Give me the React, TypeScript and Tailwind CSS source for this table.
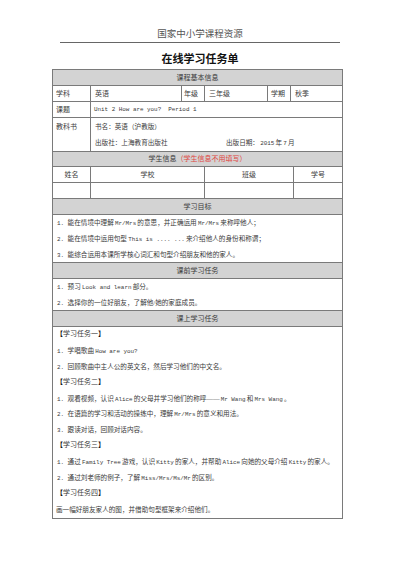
import React from "react";

const B = "border-[#7a7a7a]";

function Header({ children, h = "h-[16px]" }: { children: React.ReactNode; h?: string }) {
  return (
    <div className={`${h} border-b ${B} bg-[#d3d3d3] flex items-center justify-center text-[7px]`}>
      {children}
    </div>
  );
}

function L({ children, m = true }: { children: React.ReactNode; m?: boolean }) {
  return (
    <span className={`font-['Liberation_Mono','Noto_Sans_CJK_SC',monospace] text-[5.9px] whitespace-pre ${m ? "mx-[1.2px]" : ""}`}>
      {children}
    </span>
  );
}

function Ln({ children, h = "h-[16px]", cls = "" }: { children: React.ReactNode; h?: string; cls?: string }) {
  return <div className={`${h} overflow-visible ${cls}`}>{children}</div>;
}

function Task({ n }: { n: string }) {
  return (
    <Ln h="h-[15.9px]" cls="text-[7px]">
      <span className="font-bold text-[#111]">【</span>学习任务{n}<span className="font-bold text-[#111]">】</span>
    </Ln>
  );
}

export default function App() {
  return (
    <div className="w-[400px] h-[566px] bg-white overflow-hidden text-[#3a3a3a] font-['Liberation_Serif','Noto_Sans_CJK_SC',sans-serif]">
      <div className="pt-[27px] text-center text-[9.5px] leading-[14px] text-[#555]">国家中小学课程资源</div>
      <div className="mx-[60px] mt-[1px] border-t border-[#666]" />
      <div className="mt-[10px] text-center text-[11px] leading-[12px] font-bold text-[#111]">在线学习任务单</div>
      <div className={`mt-[4px] ml-[52px] w-[291px] border ${B} text-[6.6px] leading-[16px] whitespace-nowrap`}>
        <Header>课程基本信息</Header>
        <div className={`h-[16px] border-b ${B} grid grid-cols-[38px_91px_23px_63px_23px_1fr] text-[7px]`}>
          <div className={`border-r ${B} px-[3px] flex items-center`}>学科</div>
          <div className={`border-r ${B} px-[4px] flex items-center`}>英语</div>
          <div className={`border-r ${B} px-[2px] flex items-center`}>年级</div>
          <div className={`border-r ${B} px-[4px] flex items-center`}>三年级</div>
          <div className={`border-r ${B} px-[3px] flex items-center`}>学期</div>
          <div className="px-[4px] flex items-center">秋季</div>
        </div>
        <div className={`h-[16px] border-b ${B} grid grid-cols-[38px_1fr]`}>
          <div className={`border-r ${B} px-[3px] flex items-center text-[7px]`}>课题</div>
          <div className="px-[3px] flex items-center"><L m={false}>Unit 2 How are you?  Period 1</L></div>
        </div>
        <div className={`h-[34px] border-b ${B} grid grid-cols-[38px_1fr]`}>
          <div className={`border-r ${B} px-[3px] pt-[1px] text-[7px]`}>教科书</div>
          <div className="px-[4px] pt-[1px]">
            <Ln>书名：英语（沪教版）</Ln>
            <div className="flex h-[16px]">
              <span className="w-[131px]">出版社：上海教育出版社</span>
              <span>出版日期：<L>2015</L>年<L>7</L>月</span>
            </div>
          </div>
        </div>
        <Header h="h-[15px]">
          <span>学生信息</span>
          <span className="text-[#e0463f]">（学生信息不用填写）</span>
        </Header>
        <div className={`h-[16px] border-b ${B} grid grid-cols-[38px_114px_89px_1fr] text-[7px]`}>
          <div className={`border-r ${B} flex items-center justify-center`}>姓名</div>
          <div className={`border-r ${B} flex items-center justify-center`}>学校</div>
          <div className={`border-r ${B} flex items-center justify-center`}>班级</div>
          <div className="flex items-center justify-center">学号</div>
        </div>
        <div className={`h-[16px] border-b ${B} grid grid-cols-[38px_114px_89px_1fr]`}>
          <div className={`border-r ${B}`} />
          <div className={`border-r ${B}`} />
          <div className={`border-r ${B}`} />
          <div />
        </div>
        <Header>学习目标</Header>
        <div className={`h-[48px] border-b ${B} px-[4px]`}>
          <Ln><L m={false}>1. </L>能在情境中理解<L>Mr/Mrs</L>的意思，并正确运用<L>Mr/Mrs</L>来称呼他人；</Ln>
          <Ln><L m={false}>2. </L>能在情境中运用句型<L>This is .... ...</L>来介绍他人的身份和称谓；</Ln>
          <Ln><L m={false}>3. </L>能综合运用本课所学核心词汇和句型介绍朋友和他的家人。</Ln>
        </div>
        <Header>课前学习任务</Header>
        <div className={`h-[32px] border-b ${B} px-[4px]`}>
          <Ln><L m={false}>1. </L>预习<L>Look and learn</L>部分。</Ln>
          <Ln><L m={false}>2. </L>选择你的一位好朋友，了解他/她的家庭成员。</Ln>
        </div>
        <Header>课上学习任务</Header>
        <div className="h-[191px] px-[3px] leading-[15.9px]">
          <Task n="一" />
          <Ln h="h-[15.9px]" cls="pl-[1px]"><L m={false}>1. </L>学唱歌曲<L>How are you?</L></Ln>
          <Ln h="h-[15.9px]" cls="pl-[1px]"><L m={false}>2. </L>回顾歌曲中主人公的英文名，然后学习他们的中文名。</Ln>
          <Task n="二" />
          <Ln h="h-[15.9px]" cls="pl-[1px]"><L m={false}>1. </L>观看视频，认识<L>Alice</L>的父母并学习他们的称呼——<L>Mr Wang</L>和<L>Mrs Wang</L>。</Ln>
          <Ln h="h-[15.9px]" cls="pl-[1px]"><L m={false}>2. </L>在语篇的学习和活动的操练中，理解<L>Mr/Mrs</L>的意义和用法。</Ln>
          <Ln h="h-[15.9px]" cls="pl-[1px]"><L m={false}>3. </L>跟读对话，回顾对话内容。</Ln>
          <Task n="三" />
          <Ln h="h-[15.9px]" cls="pl-[1px]"><L m={false}>1. </L>通过<L>Family Tree</L>游戏，认识<L>Kitty</L>的家人，并帮助<L>Alice</L>向她的父母介绍<L>Kitty</L>的家人。</Ln>
          <Ln h="h-[15.9px]" cls="pl-[1px]"><L m={false}>2. </L>通过刘老师的例子，了解<L>Miss/Mrs/Ms/Mr</L>的区别。</Ln>
          <Task n="四" />
          <Ln h="h-[15.9px]">画一幅好朋友家人的图，并借助句型框架来介绍他们。</Ln>
        </div>
      </div>
    </div>
  );
}
